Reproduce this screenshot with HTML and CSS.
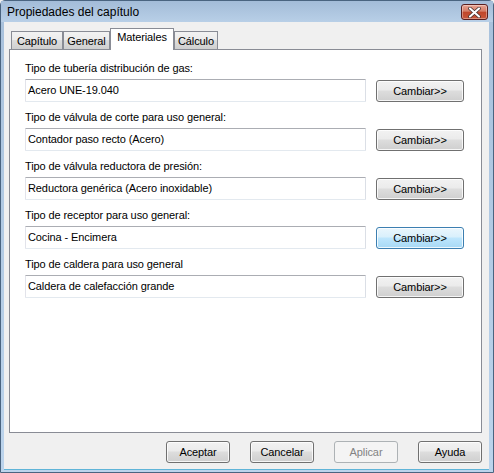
FILE: index.html
```html
<!DOCTYPE html>
<html lang="es">
<head>
<meta charset="utf-8">
<title>Propiedades del capítulo</title>
<link rel="stylesheet" href="styles.css">
</head>
<body>
<div class="window">
  <div class="titlebar">
    <span class="title">Propiedades del capítulo</span>
    <button class="close" aria-label="Cerrar">
      <svg width="15" height="11" viewBox="0 0 15 11"><path d="M3 1.5 L12 9.5 M12 1.5 L3 9.5" stroke="#3a2a2a" stroke-width="3.6" stroke-linecap="round"/><path d="M3 1.5 L12 9.5 M12 1.5 L3 9.5" stroke="#fff" stroke-width="2.2" stroke-linecap="round"/></svg>
    </button>
  </div>
  <div class="client">
    <div class="tabs">
      <div class="tab tab-cap">Capítulo</div>
      <div class="tab tab-gen">General</div>
      <div class="tab tab-mat active">Materiales</div>
      <div class="tab tab-calc">Cálculo</div>
    </div>
    <div class="panel">
      <div class="group">
        <div class="label">Tipo de tubería distribución de gas:</div>
        <div class="row"><div class="edit">Acero UNE-19.040</div><button class="btn change">Cambiar&gt;&gt;</button></div>
      </div>
      <div class="group">
        <div class="label">Tipo de válvula de corte para uso general:</div>
        <div class="row"><div class="edit">Contador paso recto (Acero)</div><button class="btn change">Cambiar&gt;&gt;</button></div>
      </div>
      <div class="group">
        <div class="label">Tipo de válvula reductora de presión:</div>
        <div class="row"><div class="edit">Reductora genérica (Acero inoxidable)</div><button class="btn change">Cambiar&gt;&gt;</button></div>
      </div>
      <div class="group">
        <div class="label">Tipo de receptor para uso general:</div>
        <div class="row"><div class="edit">Cocina - Encimera</div><button class="btn change hot">Cambiar&gt;&gt;</button></div>
      </div>
      <div class="group">
        <div class="label">Tipo de caldera para uso general</div>
        <div class="row"><div class="edit">Caldera de calefacción grande</div><button class="btn change">Cambiar&gt;&gt;</button></div>
      </div>
    </div>
    <div class="footer">
      <button class="btn">Aceptar</button>
      <button class="btn">Cancelar</button>
      <button class="btn disabled">Aplicar</button>
      <button class="btn">Ayuda</button>
    </div>
  </div>
</div>
</body>
</html>
```

FILE: styles.css
```css
* { box-sizing: border-box; }
html, body { margin: 0; padding: 0; }
body {
  width: 494px;
  height: 473px;
  overflow: hidden;
  background: #f0f0f0;
  font-family: "Liberation Sans", Arial, sans-serif;
  font-size: 11px;
  letter-spacing: -0.1px;
  color: #000;
}
.window {
  width: 494px;
  height: 473px;
  display: flex;
  flex-direction: column;
  background: linear-gradient(#a8c1dc, #bcd4ec);
  border: 1px solid #4a6480;
  border-top-left-radius: 5px;
  border-top-right-radius: 5px;
}
.titlebar {
  height: 21px;
  display: flex;
  align-items: center;
  justify-content: space-between;
  padding: 0 5px 0 6px;
  background: linear-gradient(#a3bcd8, #b8cfe7);
}
.title {
  font-family: "Liberation Sans", Arial, sans-serif;
  font-size: 12px;
  letter-spacing: 0;
  color: #000;
  padding-top: 1px;
}
.close {
  width: 27px;
  height: 16px;
  padding: 0;
  margin-top: 1px;
  border: 1px solid #5a1f1f;
  border-radius: 3px;
  background: linear-gradient(#e8a493 0%, #d47c66 45%, #c0462a 50%, #c9573b 100%);
  display: flex;
  align-items: center;
  justify-content: center;
  box-shadow: inset 0 0 0 1px rgba(255,255,255,0.35);
}
.client {
  flex: 1;
  margin: 0 4px 2px 3px;
  background: #f0f0f0;
  padding: 6px 7px 0 5px;
  display: flex;
  flex-direction: column;
  border-bottom: 1px solid #5fb4d8;
}
.tabs {
  display: flex;
  align-items: flex-end;
  height: 21px;
  padding-left: 2px;
}
.tab {
  height: 18px;
  padding: 2px 0 0 0;
  text-align: center;
  border: 1px solid #898c95;
  border-bottom: none;
  background: linear-gradient(#f2f2f2 0%, #ebebeb 50%, #dddddd 50%, #cfcfcf 100%);
  line-height: 14px;
}
.tab-cap { width: 52px; margin-right: 0; }
.tab-gen { width: 47px; }
.tab-mat { width: 64px; }
.tab-calc { width: 44px; }
.tab.active {
  height: 22px;
  background: #fff;
  padding-top: 1px;
  margin-bottom: -1px;
  position: relative;
  z-index: 1;
}
.panel {
  height: 384px;
  background: #fff;
  border: 1px solid #898c95;
  padding: 12px 0 0 15px;
  display: flex;
  flex-direction: column;
  gap: 9px;
}
.group {
  display: flex;
  flex-direction: column;
}
.label {
  line-height: 13px;
  height: 13px;
  margin-bottom: 4px;
}
.row {
  display: flex;
  align-items: center;
  height: 23px;
}
.edit {
  width: 341px;
  height: 23px;
  border: 1px solid #abadb3;
  border-color: #abadb3 #dbdfe6 #e3e9ef #e2e3ea;
  border-radius: 1px;
  background: #fff;
  padding: 4px 0 0 2px;
  line-height: 13px;
}
.btn {
  font-family: "Liberation Sans", Arial, sans-serif;
  font-size: 11px;
  letter-spacing: -0.1px;
  color: #000;
  height: 22px;
  width: 64px;
  padding: 0;
  border: 1px solid #707070;
  border-radius: 3px;
  background: linear-gradient(#f2f2f2 0%, #ebebeb 45%, #dddddd 50%, #cfcfcf 100%);
  box-shadow: inset 0 0 0 1px rgba(255,255,255,0.8);
}
.change {
  width: 88px;
  margin-left: 10px;
}
.btn.hot {
  border-color: #3c7fb1;
  background: linear-gradient(#eaf6fd 0%, #d9f0fc 45%, #bee6fd 50%, #a7d9f5 100%);
}
.btn.disabled {
  color: #838383;
  border-color: #adb2b5;
  background: #f4f4f4;
  box-shadow: none;
}
.footer {
  display: flex;
  justify-content: flex-end;
  gap: 20px;
  padding: 8px 0 0 0;
}
```
